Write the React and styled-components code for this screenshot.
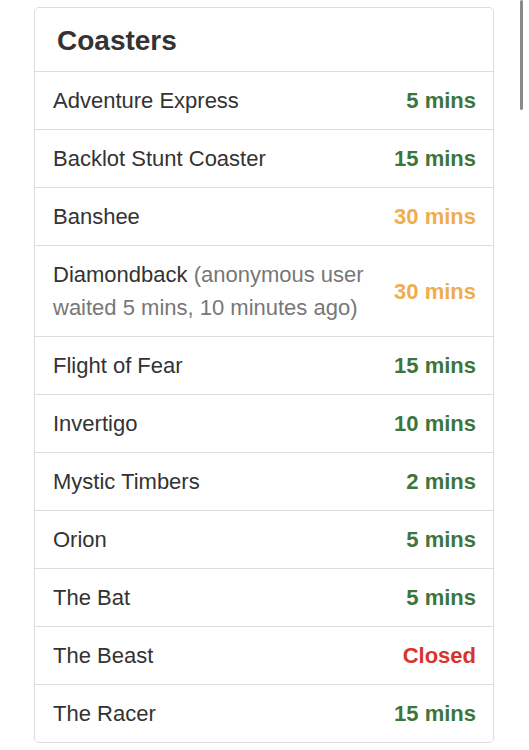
import React from 'react'
import styled, { createGlobalStyle } from 'styled-components';

const rides = [
  { name: 'Adventure Express', wait: '5 mins', status: 'ok' },
  { name: 'Backlot Stunt Coaster', wait: '15 mins', status: 'ok' },
  { name: 'Banshee', wait: '30 mins', status: 'warn' },
  {
    name: 'Diamondback',
    note: '(anonymous user waited 5 mins, 10 minutes ago)',
    wait: '30 mins',
    status: 'warn',
  },
  { name: 'Flight of Fear', wait: '15 mins', status: 'ok' },
  { name: 'Invertigo', wait: '10 mins', status: 'ok' },
  { name: 'Mystic Timbers', wait: '2 mins', status: 'ok' },
  { name: 'Orion', wait: '5 mins', status: 'ok' },
  { name: 'The Bat', wait: '5 mins', status: 'ok' },
  { name: 'The Beast', wait: 'Closed', status: 'closed' },
  { name: 'The Racer', wait: '15 mins', status: 'ok' },
];

const colors = {
  ok: '#3c763d',
  warn: '#f0ad4e',
  closed: '#d9342b',
};

const App = () => {
  return (
    <Page>
      <GlobalStyle />
      <Panel>
        <Heading>Coasters</Heading>
        <List>
          {rides.map((ride) => (
            <Row key={ride.name}>
              <Name>
                {ride.name}
                {ride.note && <Note> {ride.note}</Note>}
              </Name>
              <Wait $status={ride.status}>{ride.wait}</Wait>
            </Row>
          ))}
        </List>
      </Panel>
      <Scrollbar />
    </Page>
  );
};

export default App;

const GlobalStyle = createGlobalStyle`
  html, body {
    margin: 0;
    padding: 0;
    background: #fff;
  }
  body {
    font-family: "Liberation Sans", Arial, sans-serif;
    color: #333;
    overflow: hidden;
  }
`;

const Page = styled.div`
  position: relative;
  width: 529px;
  height: 750px;
  padding: 7px 0 0 34px;
  box-sizing: border-box;
`;

const Panel = styled.div`
  width: 460px;
  box-sizing: border-box;
  border: 1px solid #ddd;
  border-radius: 5px;
  background: #fff;
`;

const Heading = styled.div`
  height: 64px;
  padding: 2px 22px 0;
  display: flex;
  align-items: center;
  font-size: 28px;
  font-weight: bold;
  color: #333;
  border-bottom: 1px solid #ddd;
  box-sizing: border-box;
`;

const List = styled.div`
  display: flex;
  flex-direction: column;
`;

const Row = styled.div`
  display: flex;
  align-items: center;
  justify-content: space-between;
  gap: 12px;
  padding: 12px 17px 12px 18px;
  font-size: 22px;
  line-height: 33px;
  border-bottom: 1px solid #ddd;
  &:last-child {
    border-bottom: none;
  }
`;

const Name = styled.div`
  color: #333;
  flex: 1;
  min-width: 0;
`;

const Note = styled.span`
  color: #777;
`;

const Wait = styled.div`
  font-weight: bold;
  white-space: nowrap;
  color: ${(p) => colors[p.$status]};
`;

const Scrollbar = styled.div`
  position: absolute;
  top: 0;
  right: 6px;
  width: 3px;
  height: 110px;
  border-radius: 2px;
  background: #8a8a8a;
`;
